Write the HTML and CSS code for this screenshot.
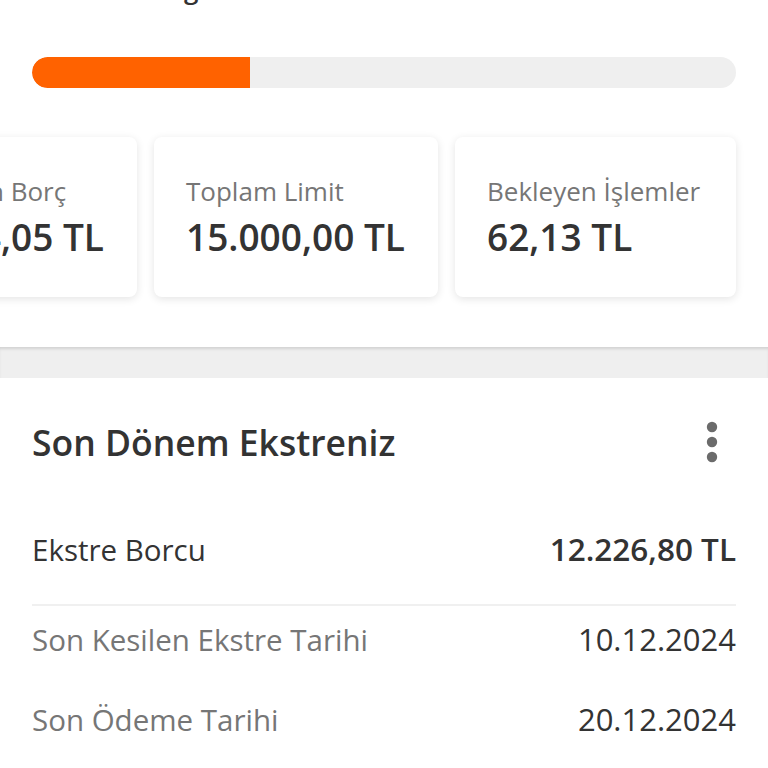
FILE: index.html
```html
<!DOCTYPE html>
<html lang="tr">
<head>
<meta charset="utf-8">
<title>Kart Detayı</title>
<link rel="stylesheet" href="styles.css">
</head>
<body>
<div class="top">
  <h2 class="top-title">Harcama Bilgileri</h2>
  <div class="progress"><div class="progress-fill" style="width:30.97%"></div></div>
</div>

<div class="cards">
  <div class="card">
    <div class="card-label">Kullanılan Borç</div>
    <div class="card-value">10.344,05 TL</div>
  </div>
  <div class="card">
    <div class="card-label">Toplam Limit</div>
    <div class="card-value">15.000,00 TL</div>
  </div>
  <div class="card">
    <div class="card-label">Bekleyen İşlemler</div>
    <div class="card-value">62,13 TL</div>
  </div>
</div>

<div class="band"></div>

<section class="statement">
  <div class="stmt-head">
    <h3 class="stmt-title">Son Dönem Ekstreniz</h3>
    <button class="kebab" aria-label="Menü">
      <svg width="12" height="42" viewBox="0 0 12 42"><circle cx="6" cy="6" r="5.2" fill="#6b6b6b"/><circle cx="6" cy="21" r="5.2" fill="#6b6b6b"/><circle cx="6" cy="36" r="5.2" fill="#6b6b6b"/></svg>
    </button>
  </div>
  <div class="row row-main">
    <span class="row-label">Ekstre Borcu</span>
    <span class="row-amount">12.226,80 TL</span>
  </div>
  <div class="details">
    <div class="row">
      <span class="row-label muted">Son Kesilen Ekstre Tarihi</span>
      <span class="row-date">10.12.2024</span>
    </div>
    <div class="row">
      <span class="row-label muted">Son Ödeme Tarihi</span>
      <span class="row-date">20.12.2024</span>
    </div>
  </div>
</section>
</body>
</html>
```

FILE: styles.css
```css
* { box-sizing: border-box; }
html, body { margin: 0; padding: 0; background: #fff; }
body {
  font-family: "Open Sans", "Noto Sans", sans-serif;
  color: #333;
  overflow: hidden;
}

.top { padding: 0 32px; }
.top-title {
  margin: -29px 0 0;
  font-size: 26px;
  line-height: 36px;
  font-weight: 600;
  color: #333;
}
.progress {
  margin-top: 50px;
  height: 31px;
  border-radius: 16px;
  background: #efefef;
  overflow: hidden;
}
.progress-fill {
  height: 100%;
  background: #ff6200;
  border-radius: 16px 0 0 16px;
}

.cards {
  display: flex;
  gap: 17px;
  margin-top: 49px;
  margin-left: -147px;
}
.card {
  flex: 0 0 284px;
  height: 160px;
  padding: 37px 32px 0;
  background: #fff;
  border-radius: 8px;
  box-shadow: 0 2px 9px rgba(0, 0, 0, 0.11);
}
.card:last-child { flex-basis: 281px; }
.card-label {
  font-size: 26px;
  line-height: 34px;
  color: #767676;
  white-space: nowrap;
}
.card-value {
  margin-top: 7px;
  font-size: 37px;
  line-height: 44px;
  font-weight: 600;
  color: #333;
  white-space: nowrap;
}

.band {
  margin-top: 50px;
  height: 31px;
  background: #efefef;
  box-shadow: inset 0 3px 3px -1px rgba(0, 0, 0, 0.12);
}

.statement { padding: 43px 32px 0; }
.stmt-head {
  display: flex;
  justify-content: space-between;
  align-items: center;
  margin-bottom: 66px;
}
.stmt-title {
  margin: 0;
  font-size: 35.5px;
  line-height: 40px;
  font-weight: 600;
  color: #333;
}
.kebab {
  border: 0;
  background: none;
  padding: 0;
  margin-right: 18px;
  display: flex;
}

.row {
  display: flex;
  justify-content: space-between;
  align-items: baseline;
  font-size: 29.5px;
  line-height: 40px;
}
.row-main {
  padding-bottom: 34px;
  border-bottom: 2px solid #f0f0f0;
}
.row-label { color: #333; }
.row-label.muted { color: #767676; }
.row-amount { font-size: 31.5px; font-weight: 600; color: #333; }
.row-date { font-size: 31px; color: #333; }

.details {
  display: flex;
  flex-direction: column;
  gap: 39px;
  padding-top: 13px;
}
```
